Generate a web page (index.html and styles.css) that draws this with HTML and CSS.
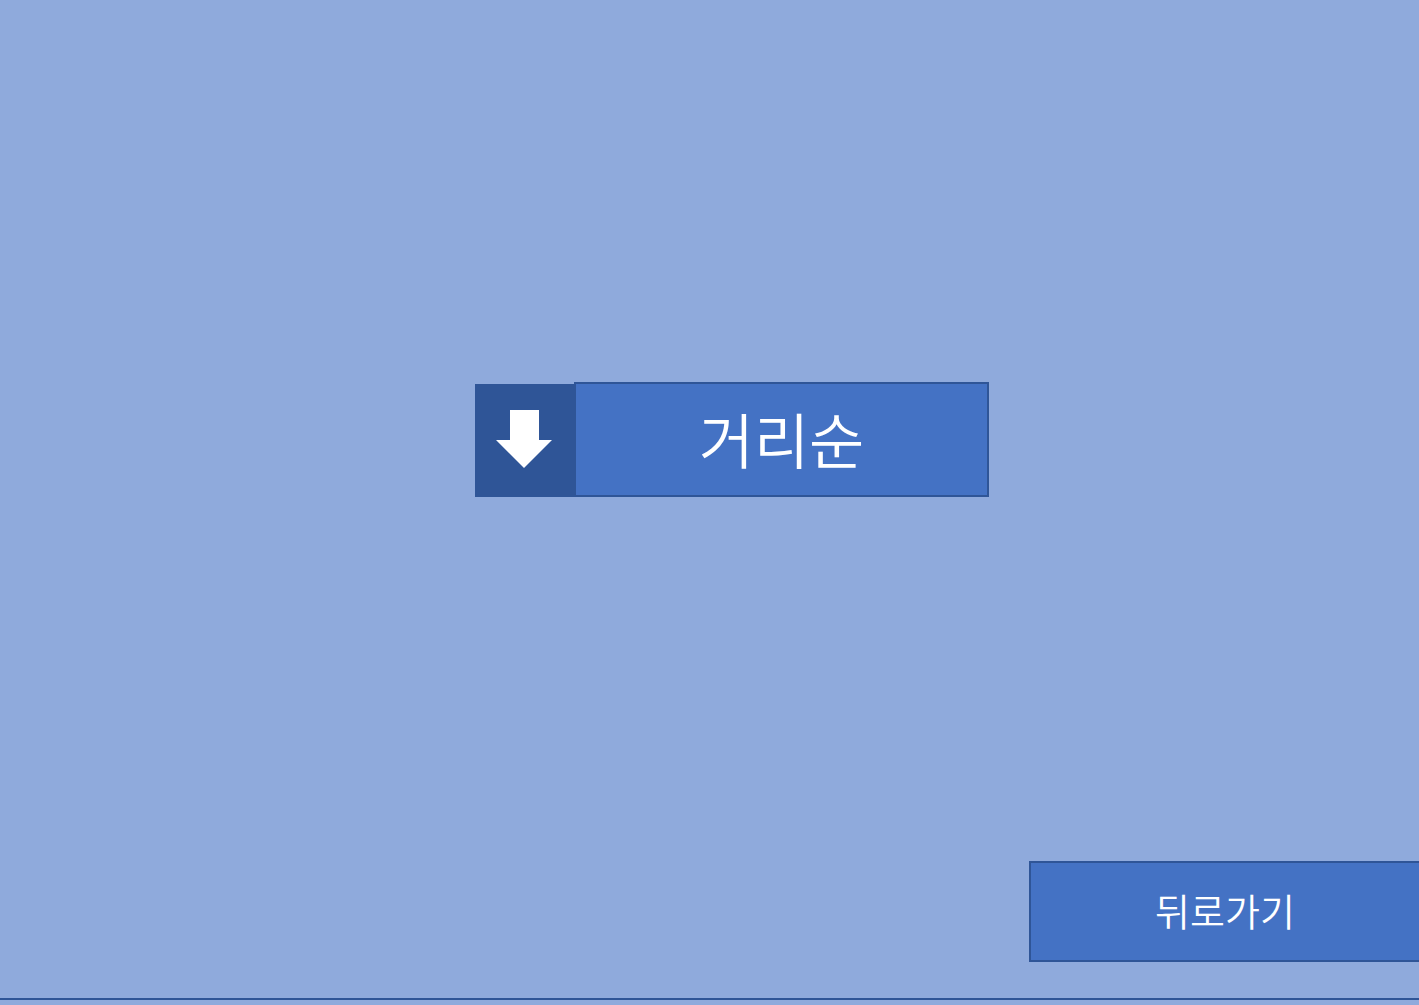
FILE: index.html
```html
<!DOCTYPE html>
<html lang="ko">
<head>
<meta charset="utf-8">
<link rel="stylesheet" href="styles.css">
</head>
<body>
<div class="stage">
  <div class="sort-group">
    <div class="sort-icon">
      <svg width="58" height="60" viewBox="0 0 58 60">
        <polygon points="15,0 44,0 44,30 57,30 29,58 1,30 15,30" fill="#ffffff"/>
      </svg>
    </div>
    <div class="sort-btn">거리순</div>
  </div>
  <div class="back-row">
    <div class="back-btn">뒤로가기</div>
  </div>
</div>
</body>
</html>
```
FILE: styles.css
```css
html, body {
  margin: 0;
  padding: 0;
  background: #8faadc;
  overflow: hidden;
}
.stage {
  box-sizing: border-box;
  width: 1419px;
  height: 1000px;
  border-bottom: 2px solid #2f5597;
  padding-top: 382px;
  font-family: "Noto Sans CJK KR", "Noto Sans", sans-serif;
  color: #ffffff;
}
.sort-group {
  display: flex;
  align-items: flex-end;
  margin-left: 475px;
}
.sort-icon {
  width: 99px;
  height: 113px;
  background: #2f5597;
  display: flex;
  align-items: center;
  justify-content: center;
}
.sort-icon svg {
  margin-left: -2px;
  margin-top: -2px;
}
.sort-btn {
  box-sizing: border-box;
  width: 415px;
  height: 115px;
  background: #4472c4;
  border: 2px solid #2f5597;
  display: flex;
  align-items: center;
  justify-content: center;
  padding-bottom: 4px;
  font-size: 60px;
  font-weight: 350;
  line-height: 1;
}
.back-row {
  margin-top: 364px;
  margin-left: 1029px;
}
.back-btn {
  box-sizing: border-box;
  width: 392px;
  height: 101px;
  background: #4472c4;
  border: 2px solid #2f5597;
  display: flex;
  align-items: center;
  justify-content: center;
  padding-bottom: 4px;
  font-size: 38px;
  font-weight: 350;
  line-height: 1;
}
```
